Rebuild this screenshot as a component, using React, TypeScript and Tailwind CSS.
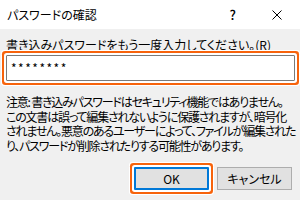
export default function App() {
  const jp = { fontFamily: '"Noto Sans CJK JP", "Noto Sans", sans-serif' };
  return (
    <div
      className="w-[300px] h-[200px] flex flex-col bg-[#f0f0f0] text-black overflow-hidden [font-feature-settings:'palt']"
      style={jp}
    >
      {/* Title bar */}
      <div className="h-[29px] bg-white flex items-center shrink-0">
        <span className="ml-[7px] text-[12px] leading-none">パスワードの確認</span>
        <span className="ml-auto text-[13px] leading-none mr-[36px] font-medium">?</span>
        <svg className="mr-[18px]" width="10" height="10" viewBox="0 0 10 10">
          <path d="M0.5 0.5 L9.5 9.5 M9.5 0.5 L0.5 9.5" stroke="#000" strokeWidth="1" />
        </svg>
      </div>

      {/* Body */}
      <div className="flex flex-col">
        <div className="mt-[8px] ml-[6px] text-[12px] leading-[16px] whitespace-nowrap">
          書き込みパスワードをもう一度入力してください。(R)
        </div>

        <div className="mt-[2px] ml-[6px] w-[289px] h-[26px] bg-white border border-[#7a7a7a] rounded-[1px] shadow-[0_0_0_2px_#ffffff,0_0_0_4px_#f7630c,0_0_0_5px_#ffffff] flex items-center">
          <span className="ml-[4px] text-[12px] leading-none tracking-[1.5px]">********</span>
        </div>

        <div className="mt-[14px] ml-[6px] text-[12px] leading-[14.5px] whitespace-nowrap tracking-[-1.2px]">
          <div>注意: 書き込みパスワードはセキュリティ機能ではありません。</div>
          <div>この文書は誤って編集されないように保護されますが、暗号化</div>
          <div>されません。悪意のあるユーザーによって、ファイルが編集された</div>
          <div>り、パスワードが削除されたりする可能性があります。</div>
        </div>

        <div className="mt-[14px] flex justify-end gap-[8px] pr-[8px]">
          <button className="w-[75px] h-[23px] bg-[#e1e1e1] border-2 border-[#0078d7] rounded-[1px] shadow-[0_0_0_2px_#ffffff,0_0_0_4px_#f7630c,0_0_0_5px_#ffffff] text-[12px] leading-none flex items-center justify-center">
            OK
          </button>
          <button className="w-[75px] h-[23px] bg-[#e1e1e1] border border-[#adadad] text-[12px] leading-none flex items-center justify-center">
            キャンセル
          </button>
        </div>
      </div>
    </div>
  );
}
